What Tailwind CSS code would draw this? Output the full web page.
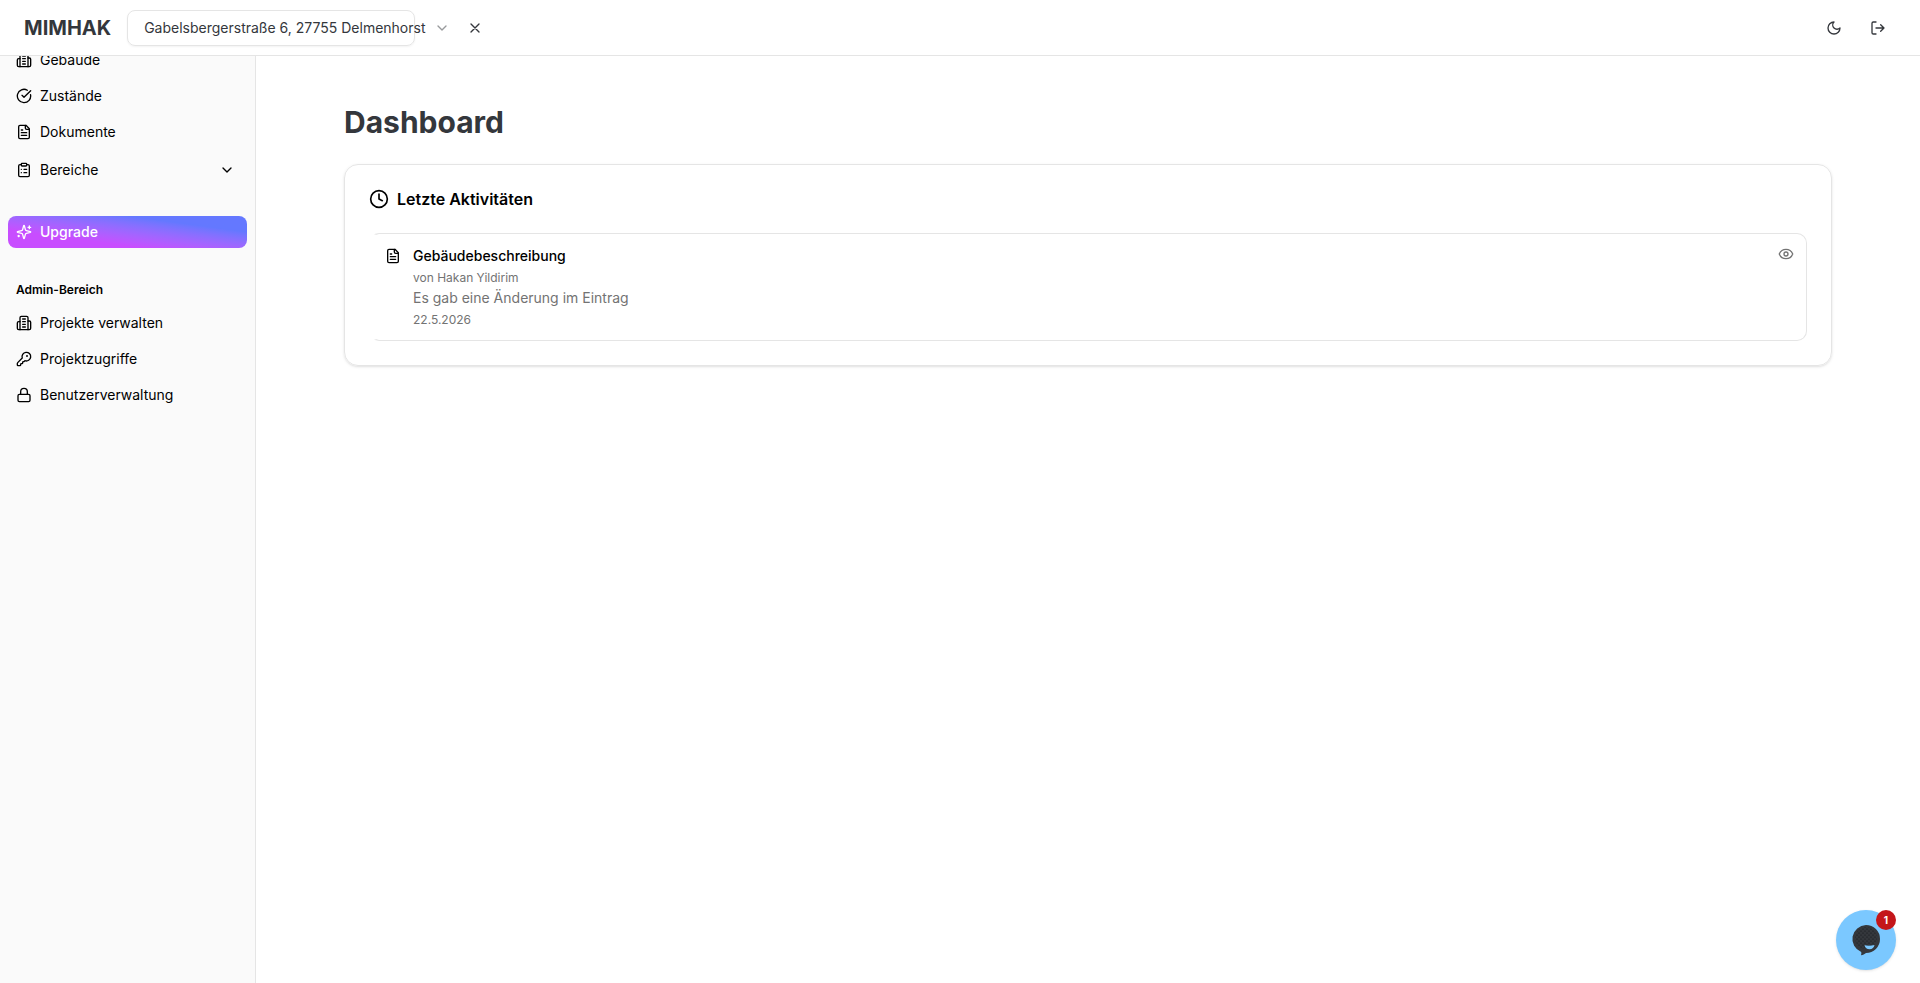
<!DOCTYPE html>
<html lang="de">
  <head>
    <meta charset="UTF-8" />
    <meta name="viewport" content="width=device-width, initial-scale=1.0" />
    <title>MIMHAK | Dashboard</title>
    <script src="https://cdn.jsdelivr.net/npm/@tailwindcss/browser@4"></script>
  </head>
  <body class="flex h-screen flex-col overflow-hidden bg-white font-['Inter',sans-serif] text-sm text-black antialiased">
    <!-- Icons -->
    <svg class="hidden" xmlns="http://www.w3.org/2000/svg">
      <symbol id="icon-building" viewBox="0 0 24 24">
        <path d="M6 22V4a2 2 0 0 1 2-2h8a2 2 0 0 1 2 2v18Z" />
        <path d="M6 10H4a2 2 0 0 0-2 2v8a2 2 0 0 0 2 2h2M18 9h2a2 2 0 0 1 2 2v9a2 2 0 0 1-2 2h-2M10 6h4M10 10h4M10 14h4M10 18h4" />
      </symbol>
      <symbol id="icon-check" viewBox="0 0 24 24">
        <path d="M21.801 10A10 10 0 1 1 17 3.335" />
        <path d="m9 11 3 3L22 4" />
      </symbol>
      <symbol id="icon-file" viewBox="0 0 24 24">
        <path d="M15 2H6a2 2 0 0 0-2 2v16a2 2 0 0 0 2 2h12a2 2 0 0 0 2-2V7Z" />
        <path d="M14 2v4a2 2 0 0 0 2 2h4M10 9H8M16 13H8M16 17H8" />
      </symbol>
      <symbol id="icon-clipboard" viewBox="0 0 24 24">
        <rect width="8" height="4" x="8" y="2" rx="1" ry="1" />
        <path d="M16 4h2a2 2 0 0 1 2 2v14a2 2 0 0 1-2 2H6a2 2 0 0 1-2-2V6a2 2 0 0 1 2-2h2M12 11h4M12 16h4M8 11h.01M8 16h.01" />
      </symbol>
      <symbol id="icon-chevron" viewBox="0 0 24 24"><path d="m6 9 6 6 6-6" /></symbol>
      <symbol id="icon-sparkles" viewBox="0 0 24 24">
        <path d="M9.937 15.5A2 2 0 0 0 8.5 14.063l-6.135-1.582a.5.5 0 0 1 0-.962L8.5 9.936A2 2 0 0 0 9.937 8.5l1.582-6.135a.5.5 0 0 1 .963 0L14.063 8.5A2 2 0 0 0 15.5 9.937l6.135 1.581a.5.5 0 0 1 0 .964L15.5 14.063a2 2 0 0 0-1.437 1.437l-1.582 6.135a.5.5 0 0 1-.963 0z" />
        <path d="M20 3v4M22 5h-4M4 17v2M5 18H3" />
      </symbol>
      <symbol id="icon-key" viewBox="0 0 24 24">
        <path d="M2.586 17.414A2 2 0 0 0 2 18.828V21a1 1 0 0 0 1 1h3a1 1 0 0 0 1-1v-1a1 1 0 0 1 1-1h1a1 1 0 0 0 1-1v-1a1 1 0 0 1 1-1h.172a2 2 0 0 0 1.414-.586l.814-.814a6.5 6.5 0 1 0-4-4z" />
        <circle cx="16.5" cy="7.5" r=".5" fill="currentColor" />
      </symbol>
      <symbol id="icon-lock" viewBox="0 0 24 24">
        <rect width="18" height="11" x="3" y="11" rx="2" ry="2" />
        <path d="M7 11V7a5 5 0 0 1 10 0v4" />
      </symbol>
      <symbol id="icon-clock" viewBox="0 0 24 24"><circle cx="12" cy="12" r="10" /><path d="M12 6v6l4 2" /></symbol>
      <symbol id="icon-eye" viewBox="0 0 24 24">
        <path d="M2.062 12.348a1 1 0 0 1 0-.696 10.75 10.75 0 0 1 19.876 0 1 1 0 0 1 0 .696 10.75 10.75 0 0 1-19.876 0" />
        <circle cx="12" cy="12" r="3" />
      </symbol>
      <symbol id="icon-x" viewBox="0 0 24 24"><path d="M18 6 6 18M6 6l12 12" /></symbol>
      <symbol id="icon-moon" viewBox="0 0 24 24"><path d="M12 3a6 6 0 0 0 9 9 9 9 0 1 1-9-9Z" /></symbol>
      <symbol id="icon-logout" viewBox="0 0 24 24">
        <path d="M9 21H5a2 2 0 0 1-2-2V5a2 2 0 0 1 2-2h4M16 17l5-5-5-5M21 12H9" />
      </symbol>
    </svg>

    <!-- Header -->
    <header class="flex h-14 shrink-0 items-center border-b border-neutral-200 px-6 text-[#34373c]">
      <a href="#" class="text-xl font-bold">MIMHAK</a>
      <div class="ml-4 flex h-9 w-72 items-center rounded-lg border border-neutral-200 pl-4 shadow-xs">
        <select aria-label="Projekt" class="shrink-0 appearance-none bg-transparent">
          <option>Gabelsbergerstraße 6, 27755 Delmenhorst</option>
        </select>
        <svg class="ml-2 size-4 shrink-0 fill-none stroke-current stroke-2 opacity-50" stroke-linecap="round" stroke-linejoin="round"><use href="#icon-chevron" /></svg>
      </div>
      <button aria-label="Auswahl aufheben" class="ml-11 flex size-8 items-center justify-center rounded-md hover:bg-neutral-100">
        <svg class="size-4 fill-none stroke-current stroke-2" stroke-linecap="round" stroke-linejoin="round"><use href="#icon-x" /></svg>
      </button>
      <div class="ml-auto flex gap-2">
        <button aria-label="Design wechseln" class="flex size-9 items-center justify-center rounded-md hover:bg-neutral-100">
          <svg class="size-4 fill-none stroke-current stroke-2" stroke-linecap="round" stroke-linejoin="round"><use href="#icon-moon" /></svg>
        </button>
        <button aria-label="Abmelden" class="flex size-9 items-center justify-center rounded-md hover:bg-neutral-100">
          <svg class="size-4 fill-none stroke-current stroke-2" stroke-linecap="round" stroke-linejoin="round"><use href="#icon-logout" /></svg>
        </button>
      </div>
    </header>

    <div class="flex min-h-0 flex-1">
      <!-- Sidebar -->
      <aside class="w-64 shrink-0 overflow-hidden border-r border-neutral-200 bg-neutral-50">
        <nav class="-mt-3 px-2">
          <ul class="space-y-1">
            <li>
              <a href="#" class="flex h-8 items-center gap-2 rounded-lg px-2 hover:bg-neutral-100">
                <svg class="size-4 fill-none stroke-current stroke-2" stroke-linecap="round" stroke-linejoin="round"><use href="#icon-building" /></svg>
                Gebäude
              </a>
            </li>
            <li>
              <a href="#" class="flex h-8 items-center gap-2 rounded-lg px-2 hover:bg-neutral-100">
                <svg class="size-4 fill-none stroke-current stroke-2" stroke-linecap="round" stroke-linejoin="round"><use href="#icon-check" /></svg>
                Zustände
              </a>
            </li>
            <li>
              <a href="#" class="flex h-8 items-center gap-2 rounded-lg px-2 hover:bg-neutral-100">
                <svg class="size-4 fill-none stroke-current stroke-2" stroke-linecap="round" stroke-linejoin="round"><use href="#icon-file" /></svg>
                Dokumente
              </a>
            </li>
            <li>
              <button class="flex h-9 w-full items-center gap-2 rounded-lg px-2 hover:bg-neutral-100">
                <svg class="size-4 fill-none stroke-current stroke-2" stroke-linecap="round" stroke-linejoin="round"><use href="#icon-clipboard" /></svg>
                Bereiche
                <svg class="mr-1 ml-auto size-4 fill-none stroke-current stroke-2" stroke-linecap="round" stroke-linejoin="round"><use href="#icon-chevron" /></svg>
              </button>
            </li>
          </ul>

          <a href="#" class="mt-7 flex h-8 items-center gap-2 rounded-lg bg-linear-to-tr from-[#c84dff] from-28% to-[#6478ff] to-75% px-2 font-medium text-white">
            <svg class="size-4 fill-none stroke-current stroke-2" stroke-linecap="round" stroke-linejoin="round"><use href="#icon-sparkles" /></svg>
            Upgrade
          </a>

          <h2 class="mt-6.5 flex h-8 items-center px-2 text-xs font-semibold">Admin-Bereich</h2>
          <ul class="mt-px space-y-1">
            <li>
              <a href="#" class="flex h-8 items-center gap-2 rounded-lg px-2 hover:bg-neutral-100">
                <svg class="size-4 fill-none stroke-current stroke-2" stroke-linecap="round" stroke-linejoin="round"><use href="#icon-building" /></svg>
                Projekte verwalten
              </a>
            </li>
            <li>
              <a href="#" class="flex h-8 items-center gap-2 rounded-lg px-2 hover:bg-neutral-100">
                <svg class="size-4 fill-none stroke-current stroke-2" stroke-linecap="round" stroke-linejoin="round"><use href="#icon-key" /></svg>
                Projektzugriffe
              </a>
            </li>
            <li>
              <a href="#" class="flex h-8 items-center gap-2 rounded-lg px-2 hover:bg-neutral-100">
                <svg class="size-4 fill-none stroke-current stroke-2" stroke-linecap="round" stroke-linejoin="round"><use href="#icon-lock" /></svg>
                Benutzerverwaltung
              </a>
            </li>
          </ul>
        </nav>
      </aside>

      <!-- Dashboard -->
      <main class="min-w-0 flex-1 overflow-y-auto px-22 py-12">
        <h1 class="text-3xl font-bold text-[#34373c]">Dashboard</h1>

        <section class="mt-6 rounded-[14px] border border-neutral-200 p-6 shadow-sm">
          <h2 class="flex items-center gap-2 text-base/5 font-semibold">
            <svg class="size-5 fill-none stroke-current stroke-2" stroke-linecap="round" stroke-linejoin="round"><use href="#icon-clock" /></svg>
            Letzte Aktivitäten
          </h2>

          <article class="mt-6 flex gap-3 rounded-[10px] border border-l-4 border-neutral-200 border-l-transparent p-3">
            <svg class="mt-0.5 size-4 shrink-0 fill-none stroke-current stroke-2" stroke-linecap="round" stroke-linejoin="round"><use href="#icon-file" /></svg>
            <div class="min-w-0 flex-1 text-neutral-500">
              <h3 class="font-medium text-black">Gebäudebeschreibung</h3>
              <p class="mt-1 text-xs">von Hakan Yildirim</p>
              <p class="mt-0.5">Es gab eine Änderung im Eintrag</p>
              <p class="mt-1 text-xs">22.5.2026</p>
            </div>
            <button aria-label="Ansehen" class="self-start text-neutral-500">
              <svg class="size-4 fill-none stroke-current stroke-2" stroke-linecap="round" stroke-linejoin="round"><use href="#icon-eye" /></svg>
            </button>
          </article>
        </section>
      </main>
    </div>

    <!-- Chat widget -->
    <button aria-label="Chat öffnen, 1 neue Nachricht" class="fixed right-6 bottom-[13px] flex size-15 items-center justify-center rounded-full bg-[#7bc8ff] shadow-sm">
      <svg class="size-8" viewBox="0 0 32 32">
        <defs>
          <pattern id="bubble-dots" width="4" height="4" patternUnits="userSpaceOnUse">
            <circle cx="1" cy="1" r=".6" fill="#0f1113" />
            <circle cx="3" cy="3" r=".6" fill="#0f1113" />
          </pattern>
        </defs>
        <path fill="#34373c" d="M16 1a14 14 0 1 1 0 28c-1.500 1.200-3 1.900-5 2.200.4-1.200.5-2.300.2-3.200A14 14 0 0 1 16 1z" />
        <circle cx="16" cy="14" r="11" fill="url(#bubble-dots)" />
        <path fill="#7bc8ff" d="M14.500 21.300c3.200.6 6.400.6 10-.3-.4 2.700-2.200 4.200-4.900 4.200s-4.500-1.400-5.100-3.900z" />
      </svg>
      <span class="absolute top-0 right-0 flex size-5 items-center justify-center rounded-full bg-[#c4161a] text-[10px] font-bold text-white">1</span>
    </button>
  </body>
</html>
